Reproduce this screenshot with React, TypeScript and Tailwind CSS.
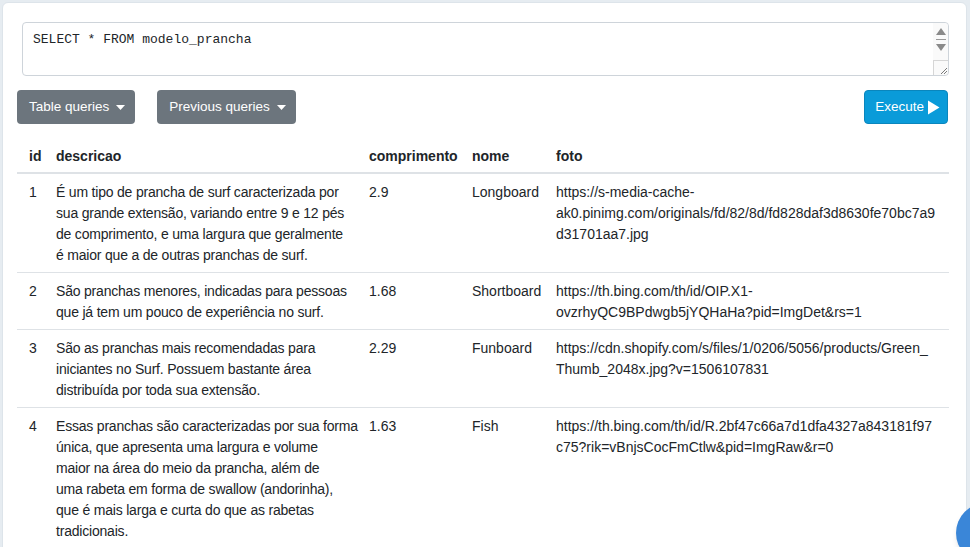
import React from "react";

type Row = { id: number; descricao: string[]; comprimento: string; nome: string; foto: string[] };

const rows: Row[] = [
  {
    id: 1,
    descricao: [
      "É um tipo de prancha de surf caracterizada por",
      "sua grande extensão, variando entre 9 e 12 pés",
      "de comprimento, e uma largura que geralmente",
      "é maior que a de outras pranchas de surf.",
    ],
    comprimento: "2.9",
    nome: "Longboard",
    foto: ["https://s-media-cache-", "ak0.pinimg.com/originals/fd/82/8d/fd828daf3d8630fe70bc7a9", "d31701aa7.jpg"],
  },
  {
    id: 2,
    descricao: ["São pranchas menores, indicadas para pessoas", "que já tem um pouco de experiência no surf."],
    comprimento: "1.68",
    nome: "Shortboard",
    foto: ["https://th.bing.com/th/id/OIP.X1-", "ovzrhyQC9BPdwgb5jYQHaHa?pid=ImgDet&rs=1"],
  },
  {
    id: 3,
    descricao: [
      "São as pranchas mais recomendadas para",
      "iniciantes no Surf. Possuem bastante área",
      "distribuída por toda sua extensão.",
    ],
    comprimento: "2.29",
    nome: "Funboard",
    foto: ["https://cdn.shopify.com/s/files/1/0206/5056/products/Green_", "Thumb_2048x.jpg?v=1506107831"],
  },
  {
    id: 4,
    descricao: [
      "Essas pranchas são caracterizadas por sua forma",
      "única, que apresenta uma largura e volume",
      "maior na área do meio da prancha, além de",
      "uma rabeta em forma de swallow (andorinha),",
      "que é mais larga e curta do que as rabetas",
      "tradicionais.",
    ],
    comprimento: "1.63",
    nome: "Fish",
    foto: ["https://th.bing.com/th/id/R.2bf47c66a7d1dfa4327a843181f97", "c75?rik=vBnjsCocFmCtlw&pid=ImgRaw&r=0"],
  },
];

const Caret = () => (
  <svg width="9" height="5" viewBox="0 0 9 5" className="ml-[7px]">
    <path d="M0 0h9L4.5 5z" fill="#fff" />
  </svg>
);

const Lines = ({ lines }: { lines: string[] }) => (
  <>
    {lines.map((l, i) => (
      <span key={i} className="block whitespace-nowrap">
        {l}
      </span>
    ))}
  </>
);

export default function App() {
  return (
    <div
      className="min-h-screen bg-[#e6ecf1] pl-[2px] pr-[3px] pt-[2px] overflow-hidden text-[#212529]"
      style={{ fontFamily: "'Liberation Sans', Arial, sans-serif" }}
    >
      <div className="bg-white rounded-[6px] border border-[#dde4ea] pl-[14px] pr-[17px] pt-[19px] pb-10 min-h-[600px]">
        {/* query editor */}
        <div className="ml-[5px] h-[54px] border border-[#ced4da] rounded-[4px] flex bg-white">
          <div
            className="flex-1 pl-[10px] pt-[9px] text-[13px] leading-[16px] text-[#212529]"
            style={{ fontFamily: "'Liberation Mono', 'DejaVu Sans Mono', monospace" }}
          >
            SELECT * FROM modelo_prancha
          </div>
          <div className="w-[15px] flex flex-col items-center bg-[#fafafa] rounded-r-[4px]">
            <svg width="10" height="7" viewBox="0 0 10 7" className="mt-[5px]">
              <path d="M5 0l5 7H0z" fill="#8a8a8a" />
            </svg>
            <div className="w-[10px] h-px bg-[#9a9a9a] mt-[4px]" />
            <svg width="10" height="7" viewBox="0 0 10 7" className="mt-[4px]">
              <path d="M0 0h10L5 7z" fill="#8a8a8a" />
            </svg>
            <div className="mt-auto w-[15px] h-[15px] border-l border-t border-[#d6d6d6] flex items-end justify-end">
              <svg width="9" height="9" viewBox="0 0 9 9">
                <path d="M8 2L2 8M8 5L5 8" stroke="#7a7a7a" strokeWidth="1" />
              </svg>
            </div>
          </div>
        </div>

        {/* toolbar */}
        <div className="mt-[14px] flex items-center">
          <button className="h-[34px] pl-[12px] pr-[10px] rounded-[4px] bg-[#6c757d] text-white text-[13.5px] flex items-center">
            Table queries
            <Caret />
          </button>
          <button className="ml-[22px] h-[34px] pl-[12px] pr-[10px] rounded-[4px] bg-[#6c757d] text-white text-[13.5px] flex items-center">
            Previous queries
            <Caret />
          </button>
          <button className="ml-auto mr-[1px] h-[34px] pl-[10px] pr-[7px] rounded-[4px] bg-[#0a9bd9] border border-[#0a86bd] text-white text-[13.5px] flex items-center">
            Execute
            <svg width="13" height="15" viewBox="0 0 13 15" className="ml-[3px]">
              <path d="M1 0.5L12.5 7.5L1 14.5z" fill="#fff" />
            </svg>
          </button>
        </div>

        {/* results */}
        <table className="mt-[13px] w-[932px] border-collapse text-[14px] leading-[21px] table-fixed">
          <colgroup>
            <col className="w-[27px]" />
            <col className="w-[313px]" />
            <col className="w-[103px]" />
            <col className="w-[84px]" />
            <col />
          </colgroup>
          <thead>
            <tr className="border-b-2 border-[#dee2e6] text-left">
              <th className="pl-[12px] pt-[9px] pb-[5px] font-bold">id</th>
              <th className="pl-[12px] pt-[9px] pb-[5px] font-bold">descricao</th>
              <th className="pl-[12px] pt-[9px] pb-[5px] font-bold">comprimento</th>
              <th className="pl-[12px] pt-[9px] pb-[5px] font-bold">nome</th>
              <th className="pl-[12px] pt-[9px] pb-[5px] font-bold">foto</th>
            </tr>
          </thead>
          <tbody>
            {rows.map((r) => (
              <tr key={r.id} className="border-b border-[#dee2e6] align-top">
                <td className="pl-[12px] pt-[8px] pb-[6px]">{r.id}</td>
                <td className="pl-[12px] pt-[8px] pb-[6px] tracking-[-0.2px]">
                  <Lines lines={r.descricao} />
                </td>
                <td className="pl-[12px] pt-[8px] pb-[6px]">{r.comprimento}</td>
                <td className="pl-[12px] pt-[8px] pb-[6px]">{r.nome}</td>
                <td className="pl-[12px] pt-[8px] pb-[6px]">
                  <Lines lines={r.foto} />
                </td>
              </tr>
            ))}
          </tbody>
        </table>
      </div>

      {/* floating action button */}
      <div className="fixed left-[956px] top-[503px] w-[60px] h-[60px] rounded-full bg-[#3a86d8] shadow-md" />
    </div>
  );
}
